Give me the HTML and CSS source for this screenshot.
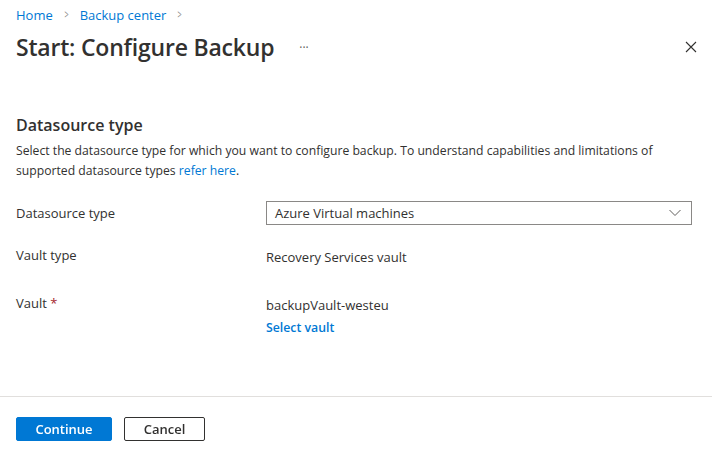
FILE: index.html
```html
<!DOCTYPE html>
<html lang="en">
<head>
    <meta charset="UTF-8">
    <title>Start: Configure Backup</title>
    <link rel="stylesheet" href="styles.css">
</head>
<body>
    <div class="blade">
        <div class="breadcrumb">
            <a href="#">Home</a>
            <span class="sep">&gt;</span>
            <a href="#">Backup center</a>
            <span class="sep">&gt;</span>
        </div>

        <div class="title-row">
            <h1>Start: Configure Backup</h1>
            <span class="more">&middot;&middot;&middot;</span>
            <button class="close-btn" title="Close">
                <svg width="12" height="12" viewBox="0 0 12 12"><path d="M1 1 L11 11 M11 1 L1 11" stroke="#323130" stroke-width="1.1" fill="none"/></svg>
            </button>
        </div>

        <div class="content">
            <h2>Datasource type</h2>
            <p class="desc">
                <span class="line">Select the datasource type for which you want to configure backup. To understand capabilities and limitations of</span>
                <span class="line">supported datasource types <a href="#">refer here</a>.</span>
            </p>

            <div class="form">
                <div class="row row-select">
                    <div class="label">Datasource type</div>
                    <div class="value">
                        <div class="dropdown">
                            <span>Azure Virtual machines</span>
                            <svg width="12" height="8" viewBox="0 0 12 8"><path d="M0.5 1 L6 6.5 L11.5 1" stroke="#605e5c" stroke-width="1" fill="none"/></svg>
                        </div>
                    </div>
                </div>
                <div class="row">
                    <div class="label">Vault type</div>
                    <div class="value text">Recovery Services vault</div>
                </div>
                <div class="row">
                    <div class="label">Vault <span class="req">*</span></div>
                    <div class="value text">
                        <div>backupVault-westeu</div>
                        <a href="#" class="select-link">Select vault</a>
                    </div>
                </div>
            </div>
        </div>

        <div class="footer">
            <button class="btn-primary">Continue</button>
            <button class="btn-default">Cancel</button>
        </div>
    </div>
</body>
</html>
```

FILE: styles.css
```css
body {
    margin: 0;
    font-family: "Open Sans", "Noto Sans", sans-serif;
    font-size: 13px;
    color: #323130;
    background: #fff;
}
a {
    color: #0078d4;
    text-decoration: none;
}
.breadcrumb {
    padding: 6px 16px 0;
    line-height: 18px;
    font-size: 13px;
    display: flex;
    align-items: center;
}
.breadcrumb .sep {
    color: #8a8886;
    margin: 0 10px;
    font-size: 12px;
    transform: scaleX(0.6);
}
.title-row {
    display: flex;
    align-items: center;
    padding: 0 11px 0 16px;
    height: 46px;
}
.title-row h1 {
    margin: 0;
    font-size: 23px;
    font-weight: 600;
    letter-spacing: -0.2px;
}
.more {
    margin-left: 25px;
    color: #605e5c;
    font-size: 12px;
}
.close-btn {
    margin-left: auto;
    border: none;
    background: none;
    padding: 4px;
    display: flex;
}
.content {
    padding: 0 20px 0 16px;
    margin-top: 44px;
}
.content h2 {
    margin: 0;
    font-size: 16px;
    font-weight: 600;
    line-height: 22px;
}
.desc {
    margin: 5px 0 0;
    line-height: 20px;
    font-size: 12.2px;
}
.desc .line {
    display: block;
}
.form {
    margin-top: 20px;
}
.row {
    display: grid;
    grid-template-columns: 250px 1fr;
}
.row-select {
    margin-bottom: 20px;
}
.row + .row {
    margin-bottom: 26px;
}
.label {
    line-height: 20px;
}
.row-select .label {
    line-height: 24px;
}
.value.text {
    padding-top: 2px;
    line-height: 20px;
}
.select-link {
    display: inline-block;
    margin-top: 3px;
    font-weight: 600;
    font-size: 12.3px;
}
.req {
    color: #a4262c;
}
.dropdown {
    height: 22px;
    border: 1px solid #8a8886;
    display: flex;
    align-items: center;
    justify-content: space-between;
    padding: 0 10px 0 8px;
}
.footer {
    position: fixed;
    left: 0;
    right: 0;
    top: 396px;
    border-top: 1px solid #e1dfdd;
    padding: 20px 16px;
    display: flex;
    gap: 12px;
}
.footer button {
    height: 24px;
    font-family: inherit;
    font-size: 13px;
    font-weight: 600;
    border-radius: 2px;
    cursor: pointer;
}
.btn-primary {
    width: 96px;
    background: #0078d4;
    border: 1px solid #0078d4;
    color: #fff;
}
.btn-default {
    width: 81px;
    background: #fff;
    border: 1px solid #323130;
    color: #323130;
}
```
